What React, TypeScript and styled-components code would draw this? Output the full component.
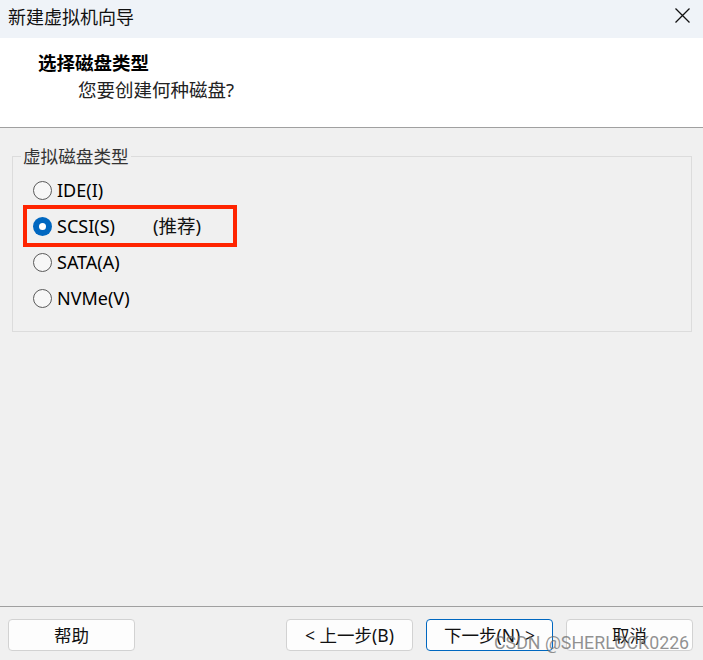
import React from "react";
import styled, { createGlobalStyle } from "styled-components";

const Global = createGlobalStyle`
  html, body { margin: 0; padding: 0; background: #f0f0f0; }
  *, *::before, *::after { box-sizing: border-box; }
`;

const FONT = `"Noto Sans", "Noto Sans CJK SC", sans-serif`;

const Window = styled.div`
  width: 703px;
  height: 660px;
  display: flex;
  flex-direction: column;
  background: #f0f0f0;
  font-family: ${FONT};
  color: #000;
  position: relative;
  overflow: hidden;
`;

const TitleBar = styled.div`
  height: 38px;
  flex: none;
  background: #eff3f8;
  display: flex;
  align-items: center;
  justify-content: space-between;
  padding: 0 13px 0 8px;
`;

const TitleText = styled.div`
  font-size: 18px;
  line-height: 20px;
  margin-top: -4px;
  color: #111;
`;

const CloseButton = styled.div`
  width: 15px;
  height: 15px;
  margin-top: -7px;
  display: flex;
`;

const Header = styled.div`
  height: 90px;
  flex: none;
  background: #fff;
  border-bottom: 1px solid #a0a0a0;
  display: flex;
  flex-direction: column;
  padding: 13px 0 0 38px;
`;

const HeaderTitle = styled.div`
  font-size: 18.5px;
  font-weight: 700;
  line-height: 22px;
  font-family: "Noto Sans CJK SC", sans-serif;
`;

const HeaderSub = styled.div`
  font-size: 18.5px;
  line-height: 22px;
  margin: 6px 0 0 40px;
  color: #222;
`;

const Body = styled.div`
  flex: 1;
  padding: 28px 11px 0 12px;
`;

const GroupBox = styled.div`
  position: relative;
  border: 1px solid #dcdcdc;
  height: 176px;
  padding: 15px 0 0 20px;
`;

const Legend = styled.div`
  position: absolute;
  top: -11px;
  left: 8px;
  padding: 0 2px;
  background: #f0f0f0;
  font-size: 17.6px;
  line-height: 20px;
  color: #333;
`;

const Row = styled.div<{ $highlight?: boolean }>`
  position: relative;
  height: 36px;
  display: flex;
  align-items: center;
  gap: 5px;
  font-size: 18px;
  ${(p) =>
    p.$highlight &&
    `
    &::after {
      content: "";
      position: absolute;
      left: -10px;
      top: -3px;
      width: 214px;
      height: 42px;
      border: 4px solid #ff2400;
    }
  `}
`;

const Radio = styled.span<{ $checked?: boolean }>`
  width: 19px;
  height: 19px;
  border-radius: 50%;
  flex: none;
  display: flex;
  align-items: center;
  justify-content: center;
  border: ${(p) => (p.$checked ? "none" : "1px solid #5a5a5a")};
  background: ${(p) => (p.$checked ? "#0067c0" : "#f7f7f7")};
  &::after {
    content: "";
    display: ${(p) => (p.$checked ? "block" : "none")};
    width: 7px;
    height: 7px;
    border-radius: 50%;
    background: #fff;
  }
`;

const Label = styled.span`
  line-height: 20px;
  color: #000;
`;

const Note = styled.span`
  margin-left: 33px;
  line-height: 20px;
  font-size: 18.5px;
  color: #111;
`;

const Footer = styled.div`
  height: 54px;
  flex: none;
  border-top: 1px solid #a0a0a0;
  display: flex;
  align-items: flex-start;
  padding: 12px 10px 0 8px;
`;

const Button = styled.div<{ $primary?: boolean }>`
  width: 127px;
  height: 32px;
  border-radius: 4px;
  background: #fdfdfd;
  border: 1px solid ${(p) => (p.$primary ? "#0067c0" : "#d2d2d2")};
  display: flex;
  align-items: center;
  justify-content: center;
  font-size: 17.5px;
  color: #111;
  line-height: 20px;
`;

const Spacer = styled.div`
  flex: 1;
`;

const ButtonGroup = styled.div`
  display: flex;
  gap: 13px;
`;

const Watermark = styled.div`
  position: absolute;
  left: 494px;
  top: 632px;
  font-family: Roboto, "Liberation Sans", sans-serif;
  font-size: 17.8px;
  line-height: 22px;
  color: rgba(110, 110, 110, 0.75);
  white-space: nowrap;
`;

export default function App() {
  return (
    <Window>
      <Global />
      <TitleBar>
        <TitleText>新建虚拟机向导</TitleText>
        <CloseButton>
          <svg width="15" height="15" viewBox="0 0 15 15">
            <path d="M0.5 0.5 L14.5 14.5 M14.5 0.5 L0.5 14.5" stroke="#111" strokeWidth="1.3" fill="none" />
          </svg>
        </CloseButton>
      </TitleBar>
      <Header>
        <HeaderTitle>选择磁盘类型</HeaderTitle>
        <HeaderSub>您要创建何种磁盘?</HeaderSub>
      </Header>
      <Body>
        <GroupBox>
          <Legend>虚拟磁盘类型</Legend>
          <Row>
            <Radio />
            <Label>IDE(I)</Label>
          </Row>
          <Row $highlight>
            <Radio $checked />
            <Label>SCSI(S)</Label>
            <Note>(推荐)</Note>
          </Row>
          <Row>
            <Radio />
            <Label>SATA(A)</Label>
          </Row>
          <Row>
            <Radio />
            <Label>NVMe(V)</Label>
          </Row>
        </GroupBox>
      </Body>
      <Footer>
        <Button>帮助</Button>
        <Spacer />
        <ButtonGroup>
          <Button>&lt; 上一步(B)</Button>
          <Button $primary>下一步(N) &gt;</Button>
          <Button>取消</Button>
        </ButtonGroup>
      </Footer>
      <Watermark>CSDN @SHERLOCK0226</Watermark>
    </Window>
  );
}
